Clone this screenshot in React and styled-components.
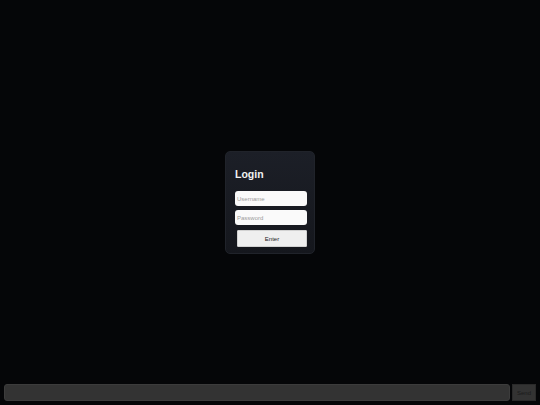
import React from "react";
import styled, { createGlobalStyle } from "styled-components";

const GlobalStyle = createGlobalStyle`
  html, body {
    margin: 0;
    padding: 0;
    height: 100%;
    background: #050608;
    font-family: "Liberation Sans", Arial, sans-serif;
  }
  #root {
    height: 100%;
  }
`;

const Page = styled.div`
  height: 100vh;
  display: flex;
  align-items: center;
  justify-content: center;
  background: #050608;
`;

const LoginCard = styled.div`
  box-sizing: border-box;
  width: 90px;
  height: 103px;
  padding: 16px 8px 0 9px;
  border-radius: 5px;
  background: linear-gradient(180deg, #1c1f27 0%, #15171d 100%);
  border: 1px solid #20232a;
  display: flex;
  flex-direction: column;
`;

const Title = styled.h2`
  margin: 0 0 11px 0;
  font-size: 10.5px;
  line-height: 12px;
  font-weight: bold;
  color: #f2f2f2;
`;

const Field = styled.input`
  box-sizing: border-box;
  width: 72px;
  height: 15px;
  margin-bottom: 4px;
  padding: 0 2px;
  border: none;
  border-radius: 3px;
  background: #fafafa;
  font-family: inherit;
  font-size: 6px;
  color: #222;
  outline: none;

  &::placeholder {
    color: #9a9a9a;
  }
`;

const EnterButton = styled.button`
  box-sizing: border-box;
  width: 70px;
  height: 17px;
  margin: 1px 0 0 2px;
  padding: 0;
  border: 1px solid #d2d2d2;
  border-radius: 1px;
  background: #efefef;
  font-family: inherit;
  font-size: 6px;
  font-weight: normal;
  color: #222;
`;

const ChatBar = styled.div`
  position: fixed;
  left: 0;
  right: 0;
  bottom: 0;
  box-sizing: border-box;
  padding: 0 4px 4px 4px;
  display: flex;
  gap: 2px;
`;

const ChatInput = styled.input`
  box-sizing: border-box;
  flex: 1;
  height: 17px;
  border: 1px solid #3c3c3c;
  border-radius: 3px;
  background: #333333;
  outline: none;
`;

const SendButton = styled.button`
  box-sizing: border-box;
  width: 24px;
  height: 17px;
  padding: 0;
  border: 1px solid #2a2a2a;
  background: #333333;
  font-family: inherit;
  font-size: 6px;
  color: #1a1a1a;
`;

export default function App() {
  return (
    <>
      <GlobalStyle />
      <Page>
        <LoginCard>
          <Title>Login</Title>
          <Field placeholder="Username" />
          <Field type="password" placeholder="Password" />
          <EnterButton>Enter</EnterButton>
        </LoginCard>
      </Page>
      <ChatBar>
        <ChatInput />
        <SendButton>Send</SendButton>
      </ChatBar>
    </>
  );
}
